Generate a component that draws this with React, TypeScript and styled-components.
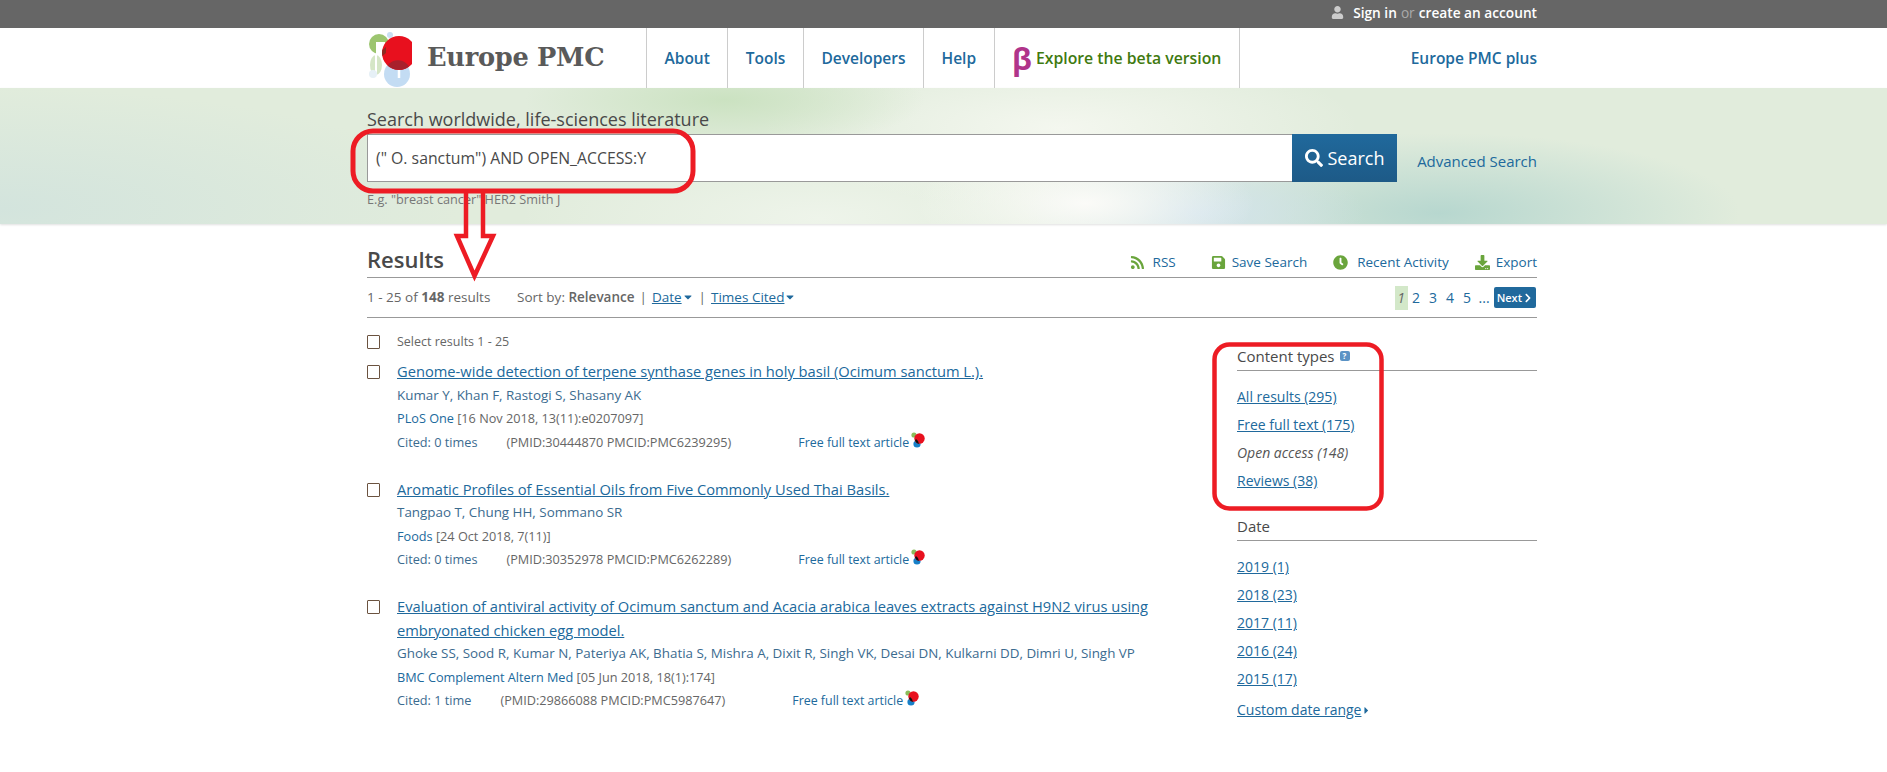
import React from 'react'
import styled, { createGlobalStyle } from 'styled-components'
import { FaCaretDown, FaCaretRight, FaChevronRight, FaClock, FaDownload, FaRss, FaSave, FaSearch, FaUser } from 'react-icons/fa'

const GlobalStyle = createGlobalStyle`
    html, body {
        margin: 0;
        padding: 0;
        background: #fff;
        font-family: 'Open Sans', sans-serif;
        color: #494949;
    }
    a {
        color: #20699c;
    }
`

const Page = styled.div`
    position: relative;
    width: 1887px;
    height: 772px;
    overflow: hidden;
`

const Container = styled.div`
    width: 1170px;
    margin-left: 367px;
`

const TopBar = styled.div`
    height: 28px;
    background: #666;
`

const TopBarInner = styled(Container)`
    box-sizing: border-box;
    height: 28px;
    padding-bottom: 3px;
    display: flex;
    align-items: center;
    justify-content: flex-end;
    font-size: 13.7px;
    font-weight: 600;
    color: #fff;

    svg {
        color: #ccc;
        font-size: 13px;
        margin-right: 9px;
    }
`

const Muted = styled.span`
    color: #aaa;
    font-weight: 400;
    margin: 0 4px;
`

const Header = styled(Container)`
    height: 60px;
    display: flex;
    align-items: stretch;
`

const Logo = styled.div`
    width: 279px;
    display: flex;
    align-items: center;
`

const LogoName = styled.span`
    font-family: 'DejaVu Serif', serif;
    font-weight: 700;
    font-size: 25.7px;
    letter-spacing: -.3px;
    color: #5a5a5a;
    margin-left: 15px;
    margin-top: -2px;
`

const NavItem = styled.div<{ $last?: boolean }>`
    display: flex;
    align-items: center;
    padding: 0 17.5px;
    border-left: 1px solid #ccc;
    border-right: ${({ $last }) => ($last ? '1px solid #ccc' : 'none')};
    font-size: 15.5px;
    font-weight: 600;
    color: #20699c;
`

const Beta = styled.span`
    font-family: 'Open Sans', sans-serif;
    font-size: 30px;
    font-weight: 700;
    line-height: 1;
    color: #b0348a;
    margin-right: 4px;
    margin-top: 2px;
`

const BetaLabel = styled.span`
    font-size: 15.8px;
    color: #3f7a10;
`

const PlusLink = styled.div`
    margin-left: auto;
    display: flex;
    align-items: center;
    font-size: 15.5px;
    font-weight: 600;
    color: #20699c;
`

const Hero = styled.div`
    height: 136px;
    box-shadow: 0 1px 2px rgba(0, 0, 0, .12);
    background:
        radial-gradient(ellipse 200px 50px at 725px 12px, #cbe2c1 0%, rgba(203, 226, 193, 0) 100%),
        radial-gradient(ellipse 170px 60px at 1085px 115px, #fbfbf8 0%, rgba(251, 251, 248, 0) 100%),
        radial-gradient(ellipse 170px 60px at 1195px 125px, #d2e3ec 0%, rgba(210, 227, 236, 0) 100%),
        radial-gradient(ellipse 300px 80px at 1440px 125px, #b7d7cf 0%, rgba(183, 215, 207, 0) 100%),
        radial-gradient(ellipse 300px 80px at 1060px 40px, #f4f7ef 0%, rgba(244, 247, 239, 0) 100%),
        radial-gradient(ellipse 300px 80px at 820px 130px, #eef4ea 0%, rgba(238, 244, 234, 0) 100%),
        radial-gradient(ellipse 460px 120px at 0px 120px, #d3e4dd 0%, rgba(211, 228, 221, 0) 100%),
        #e1ecdc;
`

const HeroInner = styled(Container)`
    padding-top: 19px;
`

const SearchLabel = styled.div`
    font-size: 18px;
    line-height: 24px;
    color: #494949;
    margin-bottom: 3px;
`

const SearchRow = styled.div`
    display: flex;
    align-items: stretch;
    height: 48px;
`

const SearchInput = styled.div`
    box-sizing: border-box;
    width: 925px;
    padding-left: 8px;
    display: flex;
    align-items: center;
    background: #fff;
    border: 1px solid #999;
    border-right: none;
    font-size: 15.8px;
    color: #494949;
`

const SearchButton = styled.div`
    width: 105px;
    display: flex;
    align-items: center;
    justify-content: center;
    background: linear-gradient(#20699c, #1d5a87);
    color: #fff;
    font-size: 18px;

    svg {
        font-size: 18px;
        margin-right: 5px;
    }
`

const AdvancedLink = styled.div`
    margin-left: auto;
    margin-top: 6px;
    display: flex;
    align-items: center;
    font-size: 15px;
    color: #20699c;
`

const Hint = styled.div`
    font-size: 12.7px;
    line-height: 16px;
    margin-top: 9px;
    color: #777;
`

const ResultsHead = styled.div`
    height: 53px;
    display: flex;
    align-items: flex-end;
    justify-content: space-between;
    border-bottom: 1px solid #999;
`

const ResultsTitle = styled.h2`
    margin: 0 0 1px;
    font-size: 22px;
    line-height: 34px;
    font-weight: 600;
    color: #494949;
`

const Tools = styled.div`
    display: flex;
    align-items: center;
    height: 28px;
    margin-bottom: 1px;
    font-size: 13.5px;
    color: #20699c;
`

const Tool = styled.span<{ $gap: number; $left: number }>`
    display: inline-flex;
    align-items: center;
    margin-left: ${({ $left }) => $left}px;

    svg {
        color: #6aa53c;
        font-size: 15px;
        margin-right: ${({ $gap }) => $gap}px;
    }
`

const ResultsMeta = styled.div`
    box-sizing: border-box;
    height: 40px;
    padding-bottom: 2px;
    display: flex;
    align-items: center;
    border-bottom: 1px solid #999;
    font-size: 13.5px;
    color: #666;
`

const Count = styled.span`
    width: 150px;

    b {
        font-weight: 700;
    }
`

const Sort = styled.span`
    b {
        font-weight: 600;
    }
    i {
        font-style: normal;
        margin: 0 5px;
        color: #666;
    }
    a {
        text-decoration: underline;
    }
    svg {
        color: #20699c;
        vertical-align: -1px;
        font-size: 12px;
    }
`

const Pager = styled.div`
    margin-left: auto;
    margin-top: 2px;
    display: flex;
    align-items: center;
    font-size: 14px;
    color: #20699c;
`

const PageNumber = styled.span<{ $current?: boolean }>`
    width: 17px;
    text-align: center;
    line-height: 24px;
    ${({ $current }) => $current && 'background: #d3e8c9; color: #666; font-style: italic; width: 13px; margin-right: 0;'}
`

const Next = styled.span`
    display: inline-flex;
    align-items: center;
    height: 21px;
    padding: 0 3px;
    margin: 0 1px 0 1px;
    border-radius: 2px;
    background: #20699c;
    color: #fff;
    font-size: 11px;
    font-weight: 600;

    svg {
        font-size: 10px;
        margin-left: 1px;
    }
`

const Body = styled.div`
    display: grid;
    grid-template-columns: 870px 300px;
`

const Main = styled.div`
    padding-top: 12px;
`

const Row = styled.div`
    display: flex;
    margin-bottom: 23.5px;
`

const SelectRow = styled(Row)`
    margin-bottom: 6.5px;
    font-size: 12.5px;
    line-height: 23.5px;
    color: #666;
`

const Check = styled.span`
    flex: none;
    box-sizing: border-box;
    width: 13px;
    height: 14px;
    margin: 5px 17px 0 0;
    border: 1.5px solid #6b5340;
    border-radius: 1px;
`

const Article = styled.div`
    width: 770px;
    font-size: 12.7px;
    line-height: 23.5px;
`

const Title = styled.a`
    display: block;
    font-size: 14.7px;
    text-decoration: underline;
`

const Authors = styled.div`
    font-size: 13.4px;
    color: #3b6b8f;
`

const Journal = styled.div`
    color: #666;

    span {
        color: #20699c;
    }
`

const Cited = styled.div`
    display: flex;
    align-items: center;
    color: #666;
`

const Times = styled.span`
    color: #3b6b8f;
    margin-right: 29px;
`

const FullText = styled.span`
    display: inline-flex;
    align-items: center;
    margin-left: 67px;
    font-size: 12.4px;
    color: #20699c;

    svg {
        margin: -5px 0 0 2px;
    }
`

const Side = styled.div`
    padding-top: 27px;
`

const SideHeading = styled.div`
    box-sizing: border-box;
    display: flex;
    align-items: center;
    height: 26px;
    padding-bottom: 3px;
    border-bottom: 1px solid #999;
    margin-bottom: 12px;
    font-size: 15px;
    color: #494949;
`

const Help = styled.span`
    width: 10px;
    height: 10px;
    margin-left: 5px;
    border-radius: 2px;
    background: #5b93c5;
    color: #fff;
    font-size: 8px;
    font-weight: 700;
    line-height: 10px;
    text-align: center;
`

const Facet = styled.a`
    display: block;
    font-size: 14px;
    line-height: 28px;
    text-decoration: underline;
`

const FacetCurrent = styled.div`
    font-size: 14px;
    line-height: 28px;
    font-style: italic;
    color: #555;
`

const FacetGroup = styled.div`
    margin-bottom: 20px;
`

const CustomRange = styled(Facet)`
    margin-top: 3px;

    svg {
        font-size: 11px;
        vertical-align: -1px;
    }
`

const Annotations = styled.svg`
    position: absolute;
    left: 0;
    top: 0;
    pointer-events: none;
`

const LogoMark = () => (
  <svg width="45" height="58" viewBox="0 0 45 58">
    <circle cx="12" cy="15" r="10" fill="#9cc56f" />
    <rect x="9" y="13" width="9" height="12" fill="#fff" />
    <circle cx="23" cy="6" r="3" fill="#c9dff2" />
    <ellipse cx="9" cy="36" rx="6" ry="10" fill="#d5e6c6" />
    <rect x="8" y="26" width="2" height="20" fill="#fff" />
    <circle cx="6" cy="45" r="4" fill="#e6f0f6" />
    <circle cx="30" cy="45" r="13" fill="#c3dcf3" />
    <path d="M20 35h12v14" fill="none" stroke="#fff" strokeWidth="2.5" />
    <circle cx="32" cy="24" r="17" fill="#e8101e" />
    <path d="M20.500 36.500A13 13 0 0 1 42 37.500A17 17 0 0 1 20.500 36.500z" fill="#a8202c" />
    <path d="M15.300 21a17 17 0 0 0 0 6l3.700-3v-6z" fill="#8d2a22" />
  </svg>
)

const ArticleMark = () => (
  <svg width="14" height="16" viewBox="0 0 14 16">
    <circle cx="3" cy="3" r="2.6" fill="#8bbd5c" />
    <circle cx="6" cy="12" r="3.6" fill="#1780c8" />
    <circle cx="8.5" cy="6.5" r="5.2" fill="#e8101e" />
    <path d="M4 8.500a5.200 5.200 0 0 0 4 3.400l-1-3-2-2z" fill="#111" />
  </svg>
)

type ArticleData = {
  title: string
  authors: string
  journal: string
  citation: string
  cited: string
  ids: string
}

const articles: ArticleData[] = [
  {
    title: 'Genome-wide detection of terpene synthase genes in holy basil (Ocimum sanctum L.).',
    authors: 'Kumar Y, Khan F, Rastogi S, Shasany AK',
    journal: 'PLoS One',
    citation: '[16 Nov 2018, 13(11):e0207097]',
    cited: 'Cited: 0 times',
    ids: '(PMID:30444870 PMCID:PMC6239295)',
  },
  {
    title: 'Aromatic Profiles of Essential Oils from Five Commonly Used Thai Basils.',
    authors: 'Tangpao T, Chung HH, Sommano SR',
    journal: 'Foods',
    citation: '[24 Oct 2018, 7(11)]',
    cited: 'Cited: 0 times',
    ids: '(PMID:30352978 PMCID:PMC6262289)',
  },
  {
    title: 'Evaluation of antiviral activity of Ocimum sanctum and Acacia arabica leaves extracts against H9N2 virus using embryonated chicken egg model.',
    authors: 'Ghoke SS, Sood R, Kumar N, Pateriya AK, Bhatia S, Mishra A, Dixit R, Singh VK, Desai DN, Kulkarni DD, Dimri U, Singh VP',
    journal: 'BMC Complement Altern Med',
    citation: '[05 Jun 2018, 18(1):174]',
    cited: 'Cited: 1 time',
    ids: '(PMID:29866088 PMCID:PMC5987647)',
  },
]

const years = ['2019 (1)', '2018 (23)', '2017 (11)', '2016 (24)', '2015 (17)']

export default function App() {
  return (
    <Page>
      <GlobalStyle />
      <TopBar>
        <TopBarInner>
          <FaUser />
          Sign in<Muted>or</Muted>create an account
        </TopBarInner>
      </TopBar>
      <Header>
        <Logo>
          <LogoMark />
          <LogoName>Europe PMC</LogoName>
        </Logo>
        <NavItem>About</NavItem>
        <NavItem>Tools</NavItem>
        <NavItem>Developers</NavItem>
        <NavItem>Help</NavItem>
        <NavItem $last>
          <Beta>β</Beta>
          <BetaLabel>Explore the beta version</BetaLabel>
        </NavItem>
        <PlusLink>Europe PMC plus</PlusLink>
      </Header>
      <Hero>
        <HeroInner>
          <SearchLabel>Search worldwide, life-sciences literature</SearchLabel>
          <SearchRow>
            <SearchInput>(" O. sanctum") AND OPEN_ACCESS:Y</SearchInput>
            <SearchButton>
              <FaSearch />
              Search
            </SearchButton>
            <AdvancedLink>Advanced Search</AdvancedLink>
          </SearchRow>
          <Hint>E.g. "breast cancer" HER2 Smith J</Hint>
        </HeroInner>
      </Hero>
      <Container>
        <ResultsHead>
          <ResultsTitle>Results</ResultsTitle>
          <Tools>
            <Tool $left={0} $gap={8}><FaRss />RSS</Tool>
            <Tool $left={35} $gap={6}><FaSave />Save Search</Tool>
            <Tool $left={26} $gap={9}><FaClock />Recent Activity</Tool>
            <Tool $left={26} $gap={6}><FaDownload />Export</Tool>
          </Tools>
        </ResultsHead>
        <ResultsMeta>
          <Count>1 - 25 of <b>148</b> results</Count>
          <Sort>
            Sort by: <b>Relevance</b><i>|</i>
            <a>Date</a><FaCaretDown /><i>|</i>
            <a>Times Cited</a><FaCaretDown />
          </Sort>
          <Pager>
            <PageNumber $current>1</PageNumber>
            <PageNumber>2</PageNumber>
            <PageNumber>3</PageNumber>
            <PageNumber>4</PageNumber>
            <PageNumber>5</PageNumber>
            <PageNumber>...</PageNumber>
            <Next>Next<FaChevronRight /></Next>
          </Pager>
        </ResultsMeta>
        <Body>
          <Main>
            <SelectRow>
              <Check />
              Select results 1 - 25
            </SelectRow>
            {articles.map((article) => (
              <Row key={article.ids}>
                <Check />
                <Article>
                  <Title>{article.title}</Title>
                  <Authors>{article.authors}</Authors>
                  <Journal><span>{article.journal}</span> {article.citation}</Journal>
                  <Cited>
                    <Times>{article.cited}</Times>
                    {article.ids}
                    <FullText>Free full text article<ArticleMark /></FullText>
                  </Cited>
                </Article>
              </Row>
            ))}
          </Main>
          <Side>
            <SideHeading>Content types<Help>?</Help></SideHeading>
            <FacetGroup>
              <Facet>All results (295)</Facet>
              <Facet>Free full text (175)</Facet>
              <FacetCurrent>Open access (148)</FacetCurrent>
              <Facet>Reviews (38)</Facet>
            </FacetGroup>
            <SideHeading>Date</SideHeading>
            {years.map((year) => (
              <Facet key={year}>{year}</Facet>
            ))}
            <CustomRange>Custom date range<FaCaretRight /></CustomRange>
          </Side>
        </Body>
      </Container>
      <Annotations width="1887" height="772" viewBox="0 0 1887 772" fill="none" stroke="#ed1c24">
        <rect x="353" y="131" width="340" height="60" rx="20" strokeWidth="5" />
        <path d="M466 192V236H457L474.500 276L493 236H483V192" strokeWidth="4.500" />
        <rect x="1214.500" y="344.500" width="167" height="164" rx="15" strokeWidth="4.500" />
      </Annotations>
    </Page>
  )
}
